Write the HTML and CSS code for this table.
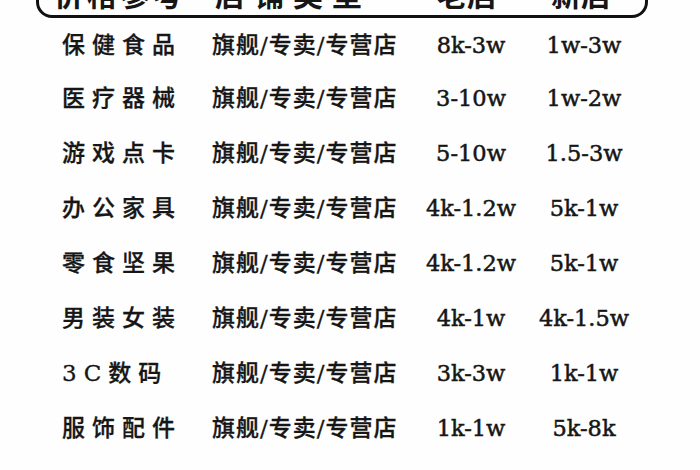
FILE: index.html
```html
<!DOCTYPE html>
<html lang="zh">
<head>
<meta charset="utf-8">
<link rel="stylesheet" href="styles.css">
</head>
<body>
<div class="page">
  <div class="head">
    <div class="head-row">
      <span class="h h1">价格参考</span>
      <span class="h h2">店铺类型</span>
      <span class="h h3">老店</span>
      <span class="h h4">新店</span>
    </div>
  </div>
  <div class="rows">
    <div class="row"><span class="c1">保健食品</span><span class="c2">旗舰/专卖/专营店</span><span class="c3">8k-3w</span><span class="c4">1w-3w</span></div>
    <div class="row"><span class="c1">医疗器械</span><span class="c2">旗舰/专卖/专营店</span><span class="c3">3-10w</span><span class="c4">1w-2w</span></div>
    <div class="row"><span class="c1">游戏点卡</span><span class="c2">旗舰/专卖/专营店</span><span class="c3">5-10w</span><span class="c4">1.5-3w</span></div>
    <div class="row"><span class="c1">办公家具</span><span class="c2">旗舰/专卖/专营店</span><span class="c3">4k-1.2w</span><span class="c4">5k-1w</span></div>
    <div class="row"><span class="c1">零食坚果</span><span class="c2">旗舰/专卖/专营店</span><span class="c3">4k-1.2w</span><span class="c4">5k-1w</span></div>
    <div class="row"><span class="c1">男装女装</span><span class="c2">旗舰/专卖/专营店</span><span class="c3">4k-1w</span><span class="c4">4k-1.5w</span></div>
    <div class="row"><span class="c1">3C数码</span><span class="c2">旗舰/专卖/专营店</span><span class="c3">3k-3w</span><span class="c4">1k-1w</span></div>
    <div class="row"><span class="c1">服饰配件</span><span class="c2">旗舰/专卖/专营店</span><span class="c3">1k-1w</span><span class="c4">5k-8k</span></div>
    <div class="row"><span class="c1">家居日用</span><span class="c2">旗舰/专卖/专营店</span><span class="c3">1k-1w</span><span class="c4">5k-1w</span></div>
  </div>
</div>
</body>
</html>
```
FILE: styles.css
```css
html, body {
  margin: 0;
  padding: 0;
  background: #fefefe;
  overflow: hidden;
}
.page {
  width: 700px;
  height: 470px;
  overflow: hidden;
  color: #161616;
  font-family: "DejaVu Serif", "Noto Sans CJK SC", serif;
}
.head {
  margin: -40px 52px 0 36px;
  height: 52px;
  border: 3px solid #111;
  border-radius: 16px;
  box-sizing: content-box;
}
.head-row {
  display: grid;
  grid-template-columns: 130px 218px 130px 98px;
  padding-left: 15px;
  height: 52px;
  align-items: end;
  white-space: nowrap;
}
.h {
  text-align: center;
  font-family: "Noto Sans CJK SC", sans-serif;
  font-weight: 700;
  font-size: 30px;
  line-height: 30px;
  position: relative;
  top: -7px;
}
.h1 { letter-spacing: 3px; }
.h2 { letter-spacing: 9px; }
.rows {
  display: flex;
  flex-direction: column;
}
.row {
  display: grid;
  grid-template-columns: 150px 200px 118px 108px;
  padding-left: 62px;
  height: 55px;
  align-items: center;
  line-height: 55px;
  white-space: nowrap;
}
.row:first-child {
  height: 53px;
}
.c1 {
  font-size: 23px;
  font-weight: 500;
  letter-spacing: 7px;
  -webkit-text-stroke: 0.3px #161616;
}
.c2 {
  font-size: 23px;
  font-weight: 500;
  letter-spacing: 1px;
  -webkit-text-stroke: 0.3px #161616;
}
.c3, .c4 {
  font-size: 22.5px;
  text-align: center;
  -webkit-text-stroke: 0.5px #161616;
}
```
